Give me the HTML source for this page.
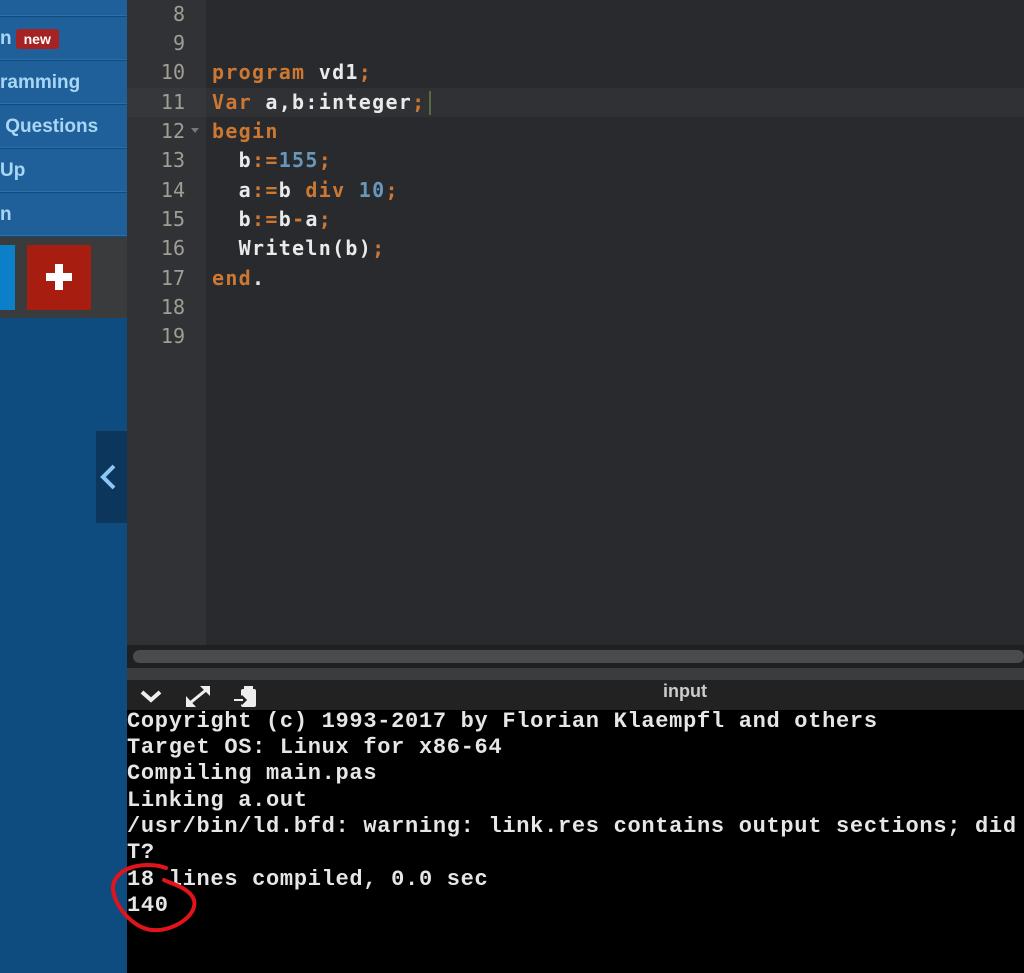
<!DOCTYPE html>
<html><head><meta charset="utf-8"><style>
*{margin:0;padding:0;box-sizing:border-box}
body{width:1024px;height:973px;overflow:hidden;background:#000;position:relative;font-family:"Liberation Sans",sans-serif}
#side{position:absolute;left:0;top:0;width:127px;height:973px;background:#0e4c80}
.mi{position:absolute;left:0;width:127px;height:43px;background:#1f609a;border-bottom:1px solid #2e6fa8;color:#a9d6f5;font-weight:bold;font-size:19px;line-height:43px;white-space:nowrap;overflow:hidden}
#gray{position:absolute;left:0;top:237px;width:127px;height:81px;background:#3a3b3d}
#ed{position:absolute;left:127px;top:0;width:897px;height:680px;background:#282a2e}
#gut{position:absolute;left:127px;top:0;width:79px;height:645px;background:#303235}
.ln{position:absolute;left:127px;width:58px;text-align:right;color:#a09e94;font-family:"DejaVu Sans Mono",monospace;font-size:20px;height:29px;line-height:29px}
.cl{position:absolute;left:212px;font-family:"DejaVu Sans Mono",monospace;font-weight:bold;font-size:20px;height:29px;line-height:29px;color:#eaeaea;white-space:pre;letter-spacing:1.3px}
.k{color:#cc7832}.n{color:#6897bb}
#term{position:absolute;left:127px;top:710px;width:897px;height:263px;background:#000}
.t{position:absolute;left:127px;font-family:"Liberation Mono",monospace;font-weight:bold;font-size:22px;color:#e6e6e6;white-space:pre;line-height:26px;letter-spacing:0.7px}
</style></head><body>
<div id="side">
<div class="mi" style="top:-27px"></div>
<div class="mi" style="top:17px">n<span style="background:#a52423;color:#fff;font-size:14px;padding:2px 8px;border-radius:3px;margin-left:4px">new</span></div>
<div class="mi" style="top:61px">ramming</div>
<div class="mi" style="top:105px">&nbsp;Questions</div>
<div class="mi" style="top:149px">Up</div>
<div class="mi" style="top:193px">n</div>
<div id="gray"></div>
<div style="position:absolute;left:0;top:245px;width:15px;height:65px;background:#0c7fc9"></div>
<div style="position:absolute;left:27px;top:245px;width:64px;height:65px;background:#a71d10"></div>
<div style="position:absolute;left:55px;top:264px;width:8px;height:26px;background:#fff"></div>
<div style="position:absolute;left:46px;top:273px;width:26px;height:8px;background:#fff"></div>
<div style="position:absolute;left:96px;top:431px;width:31px;height:92px;background:#0d365c"></div>
<svg style="position:absolute;left:98px;top:462px" width="22" height="30"><path d="M16 4 L5 15 L16 26" stroke="#8cc8f5" stroke-width="4" fill="none"/></svg>
</div>
<div id="ed"></div>
<div id="gut"></div>
<div style="position:absolute;left:206px;top:88px;width:818px;height:29px;background:#2f3134"></div>
<div style="position:absolute;left:127px;top:88px;width:79px;height:29px;background:#35373a"></div>
<div class="ln" style="top:0">8</div>
<div class="ln" style="top:29px">9</div>
<div class="ln" style="top:58px">10</div>
<div class="ln" style="top:88px">11</div>
<div class="ln" style="top:117px">12</div>
<div class="ln" style="top:146px">13</div>
<div class="ln" style="top:176px">14</div>
<div class="ln" style="top:205px">15</div>
<div class="ln" style="top:234px">16</div>
<div class="ln" style="top:264px">17</div>
<div class="ln" style="top:293px">18</div>
<div class="ln" style="top:322px">19</div>
<div style="position:absolute;left:191px;top:128px;border:4px solid transparent;border-top:5px solid #777"></div>
<div class="cl" style="top:58px"><span class="k">program</span> vd1<span class="k">;</span></div>
<div class="cl" style="top:88px"><span class="k">Var</span> a,b:integer<span class="k">;</span></div>
<div style="position:absolute;left:429px;top:91px;width:2px;height:24px;background:#5a6a40"></div>
<div class="cl" style="top:117px"><span class="k">begin</span></div>
<div class="cl" style="top:146px">  b<span class="k">:=</span><span class="n">155</span><span class="k">;</span></div>
<div class="cl" style="top:176px">  a<span class="k">:=</span>b <span class="k">div</span> <span class="n">10</span><span class="k">;</span></div>
<div class="cl" style="top:205px">  b<span class="k">:=</span>b<span class="k">-</span>a<span class="k">;</span></div>
<div class="cl" style="top:234px">  Writeln(b)<span class="k">;</span></div>
<div class="cl" style="top:264px"><span class="k">end</span>.</div>
<div style="position:absolute;left:127px;top:645px;width:897px;height:23px;background:#1f2022"></div>
<div style="position:absolute;left:133px;top:650px;width:891px;height:13px;background:#4a4b4d;border-radius:7px"></div>
<div style="position:absolute;left:127px;top:668px;width:897px;height:12px;background:#3b3c3e"></div>
<div style="position:absolute;left:127px;top:680px;width:897px;height:30px;background:#222"></div>
<svg style="position:absolute;left:138px;top:683px" width="130" height="26">
<path d="M4 9 L13 17 L22 9" stroke="#eee" stroke-width="4" fill="none"/>
<path d="M62 3 L72 3 L72 13 Z M48 13 L48 24 L58 24 Z" fill="#eee"/><path d="M52 20 L68 7" stroke="#eee" stroke-width="3"/>
<rect x="103" y="6" width="15" height="18" rx="2" fill="#eee"/><rect x="106" y="3" width="9" height="5" fill="#eee"/><path d="M96 17 L106 17 M103 13 L107 17 L103 21" stroke="#222" stroke-width="3" fill="none"/><path d="M96 17 L105 17" stroke="#eee" stroke-width="2"/>
</svg>
<div style="position:absolute;left:663px;top:680px;color:#ccc;font-weight:bold;font-size:18px;line-height:22px">input</div>
<div id="term"></div>
<div class="t" style="top:709px">Copyright (c) 1993-2017 by Florian Klaempfl and others</div>
<div class="t" style="top:735px">Target OS: Linux for x86-64</div>
<div class="t" style="top:761px">Compiling main.pas</div>
<div class="t" style="top:788px">Linking a.out</div>
<div class="t" style="top:814px">/usr/bin/ld.bfd: warning: link.res contains output sections; did</div>
<div class="t" style="top:840px">T?</div>
<div class="t" style="top:867px">18 lines compiled, 0.0 sec</div>
<div class="t" style="top:893px">140</div>
<svg style="position:absolute;left:100px;top:860px" width="110" height="80"><path d="M66 8 C50 2 22 4 14 22 C8 38 30 68 52 70 C72 72 98 56 94 40 C90 28 72 24 64 20" stroke="#e0141a" stroke-width="4" fill="none" stroke-linecap="round"/></svg>
</body></html>
